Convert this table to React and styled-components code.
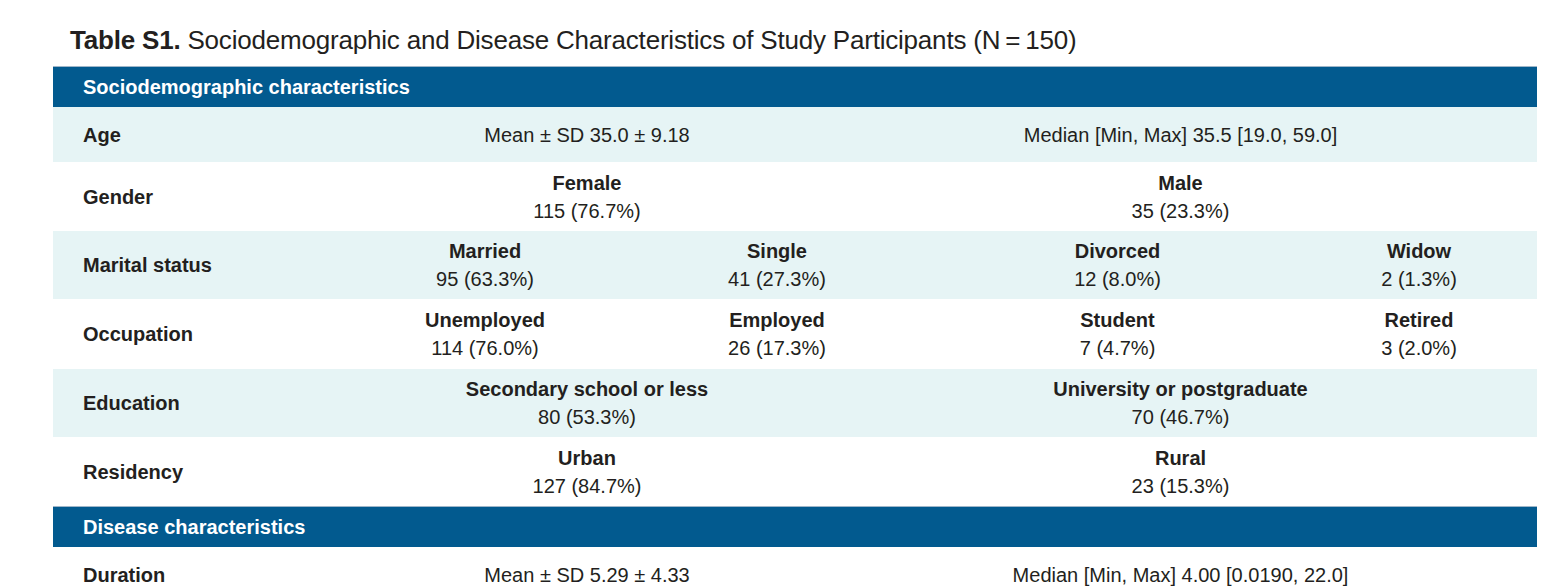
import React from 'react';
import styled, { createGlobalStyle } from 'styled-components';

const GlobalStyle = createGlobalStyle`
  body {
    margin: 0;
    background: #ffffff;
    color: #231f20;
    font-family: "Liberation Sans", Arial, sans-serif;
  }
`

const Page = styled.div`
  padding: 25px 29px 0 53px;
  width: 1484px;
`

const Title = styled.h1`
  margin: 0 0 11px 17px;
  font-size: 26px;
  line-height: 30px;
  letter-spacing: -0.2px;
  font-weight: 400;
  color: #231f20;
  white-space: nowrap;

  b {
    font-weight: 700;
  }
`

const Table = styled.div`
  display: flex;
  flex-direction: column;
`

const SectionHeader = styled.div`
  height: 41px;
  box-sizing: border-box;
  border-top: 1px solid #9fb6c9;
  background: #025a8f;
  color: #ffffff;
  font-size: 20px;
  font-weight: 700;
  padding-left: 30px;
  display: flex;
  align-items: center;
`

const Row = styled.div`
  display: grid;
  grid-template-columns: 242px 380px 204px 477px 126px 1fr;
  align-items: center;
  height: ${p => p.$height}px;
  background: ${p => (p.$shaded ? '#e6f4f5' : '#ffffff')};
  font-size: 20px;
  line-height: 28px;
`

const Label = styled.div`
  padding-left: 30px;
  font-weight: 700;
`

const Cell = styled.div`
  grid-column: span ${p => p.$span || 1};
  text-align: center;
  white-space: nowrap;
`

const Category = styled.div`
  font-weight: 700;
`

const Count = styled.div`
  font-weight: 400;
`

const rows = [
  { label: 'Age', height: 55, shaded: true, cells: [
    { span: 2, text: 'Mean ± SD 35.0 ± 9.18' },
    { span: 2, text: 'Median [Min, Max] 35.5 [19.0, 59.0]' },
  ] },
  { label: 'Gender', height: 69, cells: [
    { span: 2, title: 'Female', text: '115 (76.7%)' },
    { span: 2, title: 'Male', text: '35 (23.3%)' },
  ] },
  { label: 'Marital status', height: 68, shaded: true, cells: [
    { title: 'Married', text: '95 (63.3%)' },
    { title: 'Single', text: '41 (27.3%)' },
    { title: 'Divorced', text: '12 (8.0%)' },
    { title: 'Widow', text: '2 (1.3%)' },
  ] },
  { label: 'Occupation', height: 70, cells: [
    { title: 'Unemployed', text: '114 (76.0%)' },
    { title: 'Employed', text: '26 (17.3%)' },
    { title: 'Student', text: '7 (4.7%)' },
    { title: 'Retired', text: '3 (2.0%)' },
  ] },
  { label: 'Education', height: 68, shaded: true, cells: [
    { span: 2, title: 'Secondary school or less', text: '80 (53.3%)' },
    { span: 2, title: 'University or postgraduate', text: '70 (46.7%)' },
  ] },
  { label: 'Residency', height: 69, cells: [
    { span: 2, title: 'Urban', text: '127 (84.7%)' },
    { span: 2, title: 'Rural', text: '23 (15.3%)' },
  ] },
]

const diseaseRows = [
  { label: 'Duration', height: 55, cells: [
    { span: 2, text: 'Mean ± SD 5.29 ± 4.33' },
    { span: 2, text: 'Median [Min, Max] 4.00 [0.0190, 22.0]' },
  ] },
]

const DataRow = ({ row }) => (
  <Row $height={row.height} $shaded={row.shaded}>
    <Label>{row.label}</Label>
    {row.cells.map((c, i) => (
      <Cell key={i} $span={c.span}>
        {c.title && <Category>{c.title}</Category>}
        <Count>{c.text}</Count>
      </Cell>
    ))}
  </Row>
)

const App = () => {
  return (
    <>
      <GlobalStyle />
      <Page>
        <Title>
          <b>Table S1.</b> Sociodemographic and Disease Characteristics of Study Participants (N{'\u2009'}={'\u2009'}150)
        </Title>
        <Table>
          <SectionHeader>Sociodemographic characteristics</SectionHeader>
          {rows.map(r => <DataRow key={r.label} row={r} />)}
          <SectionHeader>Disease characteristics</SectionHeader>
          {diseaseRows.map(r => <DataRow key={r.label} row={r} />)}
        </Table>
      </Page>
    </>
  )
}

export default App;
